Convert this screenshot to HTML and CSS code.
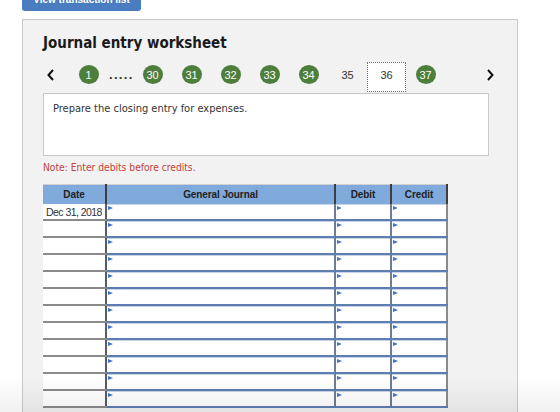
FILE: index.html
```html
<!DOCTYPE html>
<html>
    <head>
        <meta charset="utf-8">
        <title>Journal entry worksheet</title>
        <link rel="stylesheet" href="styles.css">
    </head>
    <body>
        <button class="list-btn" type="button">View transaction list</button>
        <div class="panel">
            <h2 class="title">Journal entry worksheet</h2>
            <div class="pager">
                <span class="arrow prev">
                    <svg width="7" height="12" viewBox="0 0 7 12"><path d="M6 1 L1.5 6 L6 11" fill="none" stroke="#111" stroke-width="2"/></svg>
                </span>
                <span class="slot"><span class="dot">1</span></span>
                <span class="dots">.....</span>
                <span class="slot"><span class="dot">30</span></span>
                <span class="slot"><span class="dot">31</span></span>
                <span class="slot"><span class="dot">32</span></span>
                <span class="slot"><span class="dot">33</span></span>
                <span class="slot"><span class="dot">34</span></span>
                <span class="slot">35</span>
                <span class="slot current">36</span>
                <span class="slot"><span class="dot">37</span></span>
                <span class="arrow next">
                    <svg width="7" height="12" viewBox="0 0 7 12"><path d="M1 1 L5.5 6 L1 11" fill="none" stroke="#111" stroke-width="2"/></svg>
                </span>
            </div>
            <div class="task">Prepare the closing entry for expenses.</div>
            <p class="note">Note: Enter debits before credits.</p>
            <table class="journal">
                <colgroup>
                    <col class="c-date">
                    <col class="c-acct">
                    <col class="c-amt">
                    <col class="c-amt">
                </colgroup>
                <thead>
                    <tr><th>Date</th><th>General Journal</th><th>Debit</th><th>Credit</th></tr>
                </thead>
                <tbody>
                    <tr><td class="date">Dec 31, 2018</td><td class="in"><div class="field"></div></td><td class="in"><div class="field"></div></td><td class="in"><div class="field"></div></td></tr>
                    <tr><td class="date"></td><td class="in"><div class="field"></div></td><td class="in"><div class="field"></div></td><td class="in"><div class="field"></div></td></tr>
                    <tr><td class="date"></td><td class="in"><div class="field"></div></td><td class="in"><div class="field"></div></td><td class="in"><div class="field"></div></td></tr>
                    <tr><td class="date"></td><td class="in"><div class="field"></div></td><td class="in"><div class="field"></div></td><td class="in"><div class="field"></div></td></tr>
                    <tr><td class="date"></td><td class="in"><div class="field"></div></td><td class="in"><div class="field"></div></td><td class="in"><div class="field"></div></td></tr>
                    <tr><td class="date"></td><td class="in"><div class="field"></div></td><td class="in"><div class="field"></div></td><td class="in"><div class="field"></div></td></tr>
                    <tr><td class="date"></td><td class="in"><div class="field"></div></td><td class="in"><div class="field"></div></td><td class="in"><div class="field"></div></td></tr>
                    <tr><td class="date"></td><td class="in"><div class="field"></div></td><td class="in"><div class="field"></div></td><td class="in"><div class="field"></div></td></tr>
                    <tr><td class="date"></td><td class="in"><div class="field"></div></td><td class="in"><div class="field"></div></td><td class="in"><div class="field"></div></td></tr>
                    <tr><td class="date"></td><td class="in"><div class="field"></div></td><td class="in"><div class="field"></div></td><td class="in"><div class="field"></div></td></tr>
                    <tr><td class="date"></td><td class="in"><div class="field"></div></td><td class="in"><div class="field"></div></td><td class="in"><div class="field"></div></td></tr>
                    <tr><td class="date"></td><td class="in"><div class="field"></div></td><td class="in"><div class="field"></div></td><td class="in"><div class="field"></div></td></tr>
                </tbody>
            </table>
        </div>
        <div class="fade"></div>
    </body>
</html>
```

FILE: styles.css
```css
html, body{
    margin: 0;
    overflow: hidden;
}
body{
    background: #fff;
    font-family: "DejaVu Sans Condensed", "DejaVu Sans", Verdana, sans-serif;
    color: #333;
}
.list-btn{
    display: block;
    margin: -13px 0 0 22px;
    width: 119px;
    height: 24px;
    padding: 0;
    border: 0;
    border-radius: 3px;
    background: #4a7cc0;
    color: #fff;
    font: bold 10px "Liberation Sans", Arial, sans-serif;
}
.panel{
    box-sizing: border-box;
    width: 496px;
    height: 420px;
    margin: 8px 0 0 22px;
    padding: 14px 0 0 20px;
    background: #f2f2f2;
    border: 1px solid #cacaca;
}
.title{
    margin: 0;
    font-size: 15px;
    line-height: 18px;
    color: #1a1a1a;
}
.pager{
    display: flex;
    align-items: flex-start;
    height: 30px;
    margin-top: 10px;
    font: 11px "Liberation Sans", Arial, sans-serif;
    color: #333;
}
.arrow{
    display: flex;
    align-items: center;
    height: 25px;
}
.prev{
    width: 22px;
    padding-left: 4px;
}
.next{
    margin-left: 42px;
}
.slot{
    box-sizing: border-box;
    display: flex;
    align-items: center;
    justify-content: center;
    width: 39px;
    height: 25px;
}
.dot{
    display: flex;
    align-items: center;
    justify-content: center;
    width: 20px;
    height: 19px;
    border-radius: 50%;
    background: #4d7e3b;
    color: #fff;
}
.dots{
    width: 25px;
    height: 25px;
    line-height: 25px;
    padding-left: 1px;
    box-sizing: border-box;
    font-size: 13px;
    font-weight: bold;
    letter-spacing: 1.3px;
    color: #333;
}
.current{
    height: 30px;
    padding-bottom: 5px;
    border: 1px dotted #5478bd;
    background: #fff;
}
.task{
    box-sizing: border-box;
    width: 446px;
    height: 63px;
    margin-top: 1px;
    padding: 8px 9px;
    background: #fff;
    border: 1px solid #c9c9c9;
    font-size: 11px;
    line-height: 14px;
    color: #333;
}
.note{
    margin: 5px 0 0;
    font-size: 10.2px;
    line-height: 13px;
    color: #c0443b;
}
.journal{
    margin-top: 10px;
    width: 404px;
    table-layout: fixed;
    border-collapse: collapse;
    font-family: "Liberation Sans", Arial, sans-serif;
}
.c-date{ width: 63px; }
.c-acct{ width: 229px; }
.c-amt{ width: 56px; }
.journal th{
    height: 19px;
    padding: 0;
    background: #80a9dc;
    border-top: 1px solid #d0d0d0;
    font-size: 10px;
    font-weight: bold;
    letter-spacing: -0.1px;
    color: #222;
}
.journal th + th{
    border-left: 2px solid #3e3e3e;
}
.journal th:last-child{
    border-right: 2px solid #3e3e3e;
}
.journal td{
    height: 15px;
    padding: 0;
    background: #fff;
}
.journal .date{
    padding-left: 3px;
    border-bottom: 2px solid #8a8a8a;
    font-size: 10.5px;
    letter-spacing: -0.55px;
    color: #333;
    white-space: nowrap;
}
.journal .in{
    border-left: 2px solid #707d90;
    border-bottom: 2px solid #5e7eb1;
}
.journal .date + .in{
    border-left-color: #555d68;
}
.journal td:last-child{
    border-right: 2px solid #8a8a8a;
}
.field{
    position: relative;
    height: 15px;
    border-top: 1px solid #c6d4ea;
    box-sizing: border-box;
}
.field::before{
    content: "";
    position: absolute;
    top: 1px;
    left: 1px;
    border-left: 5px solid #3f74c8;
    border-top: 2px solid transparent;
    border-bottom: 2px solid transparent;
}
.fade{
    position: fixed;
    left: 0;
    right: 0;
    bottom: 0;
    height: 34px;
    background: linear-gradient(rgba(0,0,0,0), rgba(0,0,0,0.06));
    pointer-events: none;
}
```
